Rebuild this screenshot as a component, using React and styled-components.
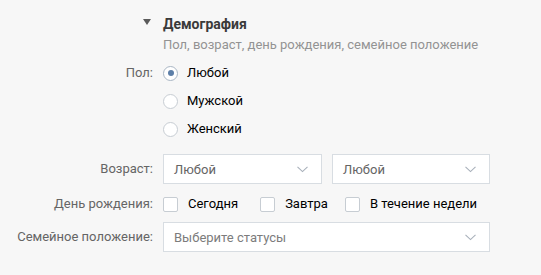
import React from 'react'
import styled, { createGlobalStyle } from 'styled-components'

const GlobalStyle = createGlobalStyle`
  html, body {
    margin: 0;
    padding: 0;
    background: #f7f7f7;
  }
  body {
    font-family: Roboto, 'Open Sans', 'DejaVu Sans', sans-serif;
    font-size: 13px;
    color: #000;
  }
`

const Panel = styled.div`
  width: 541px;
  height: 275px;
  padding-top: 15px;
  box-sizing: border-box;
`

const Row = styled.div`
  display: flex;
  align-items: ${p => p.$top ? 'flex-start' : 'center'};
  margin-top: ${p => p.$mt || 0}px;
`

const Label = styled.div`
  width: 153px;
  flex-shrink: 0;
  text-align: right;
  color: #656565;
  line-height: ${p => p.$lh || 18}px;
  margin-right: 10px;
`

const Arrow = styled.span`
  display: inline-block;
  width: 0;
  height: 0;
  margin-right: 2px;
  border-left: 4px solid transparent;
  border-right: 4px solid transparent;
  border-top: 6px solid #5a5a5a;
  vertical-align: 3px;
`

const Header = styled.div`
  display: flex;
  flex-direction: column;
`

const Title = styled.div`
  font-weight: 700;
  font-size: 14px;
  color: #3a3a3a;
  line-height: 18px;
`

const Subtitle = styled.div`
  color: #939393;
  line-height: 18px;
  margin-top: 3px;
`

const Stack = styled.div`
  display: flex;
  flex-direction: column;
`

const Option = styled.label`
  display: flex;
  align-items: center;
  height: ${p => p.$h || 28}px;
  margin-right: ${p => p.$mr || 0}px;
  line-height: 18px;
`

const Radio = styled.span`
  position: relative;
  width: 15px;
  height: 15px;
  box-sizing: border-box;
  border: 1px solid ${p => p.$on ? '#a9b6c4' : '#c7cdd3'};
  border-radius: 50%;
  background: #fff;
  margin-right: 9px;

  &::after {
    content: '';
    display: ${p => p.$on ? 'block' : 'none'};
    position: absolute;
    left: 3.5px;
    top: 3.5px;
    width: 6px;
    height: 6px;
    border-radius: 50%;
    background: #5d7fa8;
  }
`

const Check = styled.span`
  width: 15px;
  height: 15px;
  box-sizing: border-box;
  border: 1px solid #c7cdd3;
  border-radius: 2px;
  background: #fff;
  margin-right: 10px;
`

const Selects = styled.div`
  display: flex;
  gap: 10px;
`

const Select = styled.div`
  display: flex;
  align-items: center;
  justify-content: space-between;
  width: ${p => p.$w}px;
  height: 30px;
  box-sizing: border-box;
  border: 1px solid #d8dde2;
  background: #fff;
  padding: 0 13px 0 10px;
  color: ${p => p.$placeholder ? '#7c7c7c' : '#656565'};
`

const Chevron = () => (
  <svg width="11" height="7" viewBox="0 0 11 7">
    <path d="M0.5 0.8 L5.5 5.6 L10.5 0.8" fill="none" stroke="#a8b0ba" strokeWidth="1.1" />
  </svg>
)

export default function App() {
  return (
    <Panel>
      <GlobalStyle />
      <Row $top>
        <Label><Arrow /></Label>
        <Header>
          <Title>Демография</Title>
          <Subtitle>Пол, возраст, день рождения, семейное положение</Subtitle>
        </Header>
      </Row>

      <Row $top $mt={5}>
        <Label $lh={28}>Пол:</Label>
        <Stack>
          <Option><Radio $on />Любой</Option>
          <Option><Radio />Мужской</Option>
          <Option><Radio />Женский</Option>
        </Stack>
      </Row>

      <Row $mt={11}>
        <Label>Возраст:</Label>
        <Selects>
          <Select $w={159}>Любой<Chevron /></Select>
          <Select $w={158}>Любой<Chevron /></Select>
        </Selects>
      </Row>

      <Row $mt={10}>
        <Label>День рождения:</Label>
        <Option $h={20} $mr={22}><Check />Сегодня</Option>
        <Option $h={20} $mr={17}><Check />Завтра</Option>
        <Option $h={20}><Check />В течение недели</Option>
      </Row>

      <Row $mt={8}>
        <Label>Семейное положение:</Label>
        <Select $w={327} $placeholder>Выберите статусы<Chevron /></Select>
      </Row>
    </Panel>
  )
}
